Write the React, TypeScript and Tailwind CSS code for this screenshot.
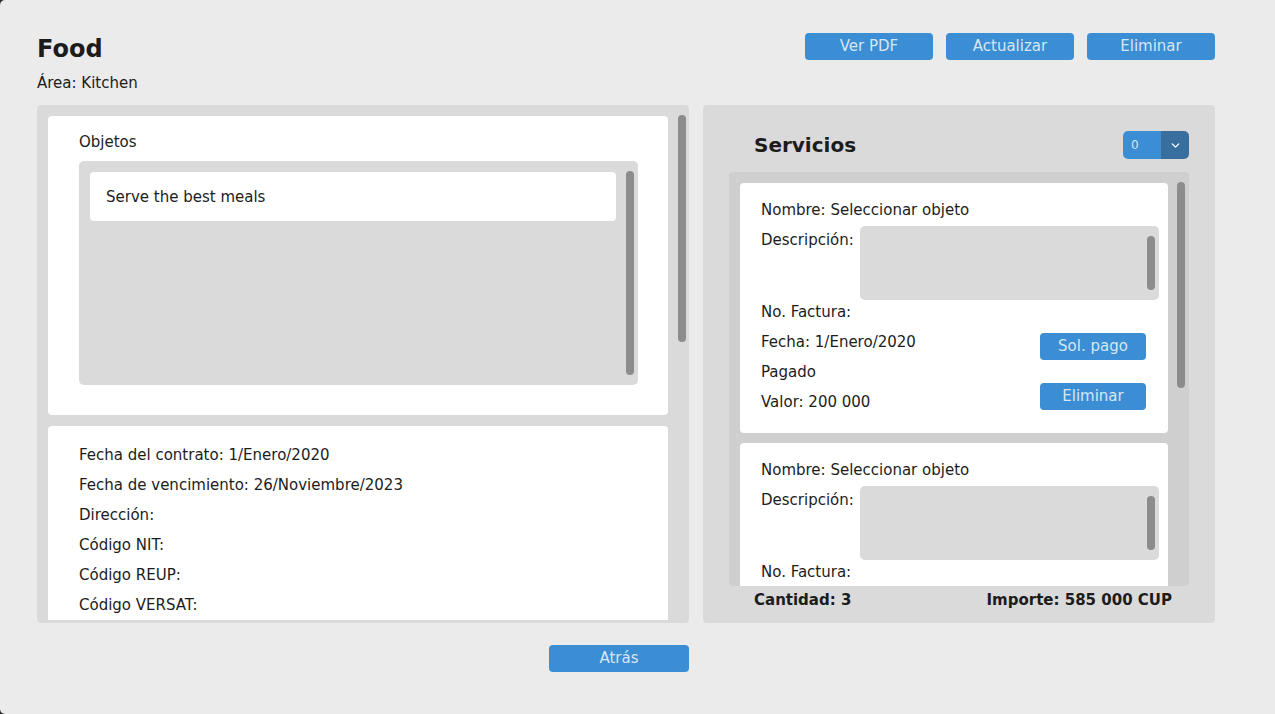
import { ChevronDown } from "lucide-react"

const font = "font-['DejaVu_Sans',sans-serif]"

function BlueButton({ label, className = "" }: { label: string; className?: string }) {
  return (
    <button className={`bg-[#3b8ed3] text-[#d6e6f4] rounded-[4px] text-[15px] leading-[27px] h-[27px] ${className}`}>
      {label}
    </button>
  )
}

function ServiceCard() {
  return (
    <div className="bg-white rounded-[4px] w-[428px] h-[250px] shrink-0 pl-[21px] pr-[9px] pt-[16px] text-[15px] leading-[22px]">
      <div>Nombre: Seleccionar objeto</div>
      <div className="flex mt-[5px]">
        <span className="mt-[3px] mr-[6px]">Descripción:</span>
        <div className="flex-1 h-[74px] bg-[#dadada] rounded-[5px] flex justify-end pt-[10px] pr-[4px]">
          <div className="w-[8px] h-[54px] rounded-full bg-[#8c8c8c]" />
        </div>
      </div>
      <div className="flex justify-between pr-[13px]">
        <div className="flex flex-col gap-[8px] mt-[1px]">
          <span>No. Factura:</span>
          <span>Fecha: 1/Enero/2020</span>
          <span>Pagado</span>
          <span>Valor: 200 000</span>
        </div>
        <div className="flex flex-col pt-[33px] gap-[23px]">
          <BlueButton label="Sol. pago" className="w-[106px]" />
          <BlueButton label="Eliminar" className="w-[106px]" />
        </div>
      </div>
    </div>
  )
}

export default function App() {
  return (
    <div className={`w-full h-[714px] bg-[#2a2a2a] ${font} text-[#1c1c1c]`}>
      <div className="h-full bg-[#ebebeb] rounded-l-[5px] pl-[37px] pr-[60px] pt-[31px]">
        {/* Header */}
        <div className="flex justify-between items-start">
          <div>
            <h1 className="text-[24px] font-bold leading-[36px]">Food</h1>
            <p className="text-[15px] leading-[22px] mt-[5px]">Área: Kitchen</p>
          </div>
          <div className="flex gap-[13px] mt-[2px]">
            <BlueButton label="Ver PDF" className="w-[128px]" />
            <BlueButton label="Actualizar" className="w-[128px]" />
            <BlueButton label="Eliminar" className="w-[128px]" />
          </div>
        </div>

        {/* Panels */}
        <div className="flex gap-[14px] mt-[11px] h-[518px]">
          {/* Left panel */}
          <div className="w-[652px] h-full bg-[#dadada] rounded-[4px] pl-[11px] pt-[11px] pr-[3px] pb-[3px] flex gap-[10px]">
            <div className="w-[620px] h-full flex flex-col gap-[11px] shrink-0 overflow-hidden">
              <div className="bg-white rounded-[4px] h-[299px] shrink-0 pl-[31px] pr-[30px] pt-[15px] text-[15px]">
                <div className="leading-[22px]">Objetos</div>
                <div className="mt-[8px] h-[224px] bg-[#dadada] rounded-[5px] flex pl-[11px] pt-[11px] pr-[4px] gap-[10px]">
                  <div className="flex-1 h-[49px] bg-white rounded-[4px] pl-[16px] pt-[1px] flex items-center">
                    Serve the best meals
                  </div>
                  <div className="w-[8px] h-[204px] -mt-[1px] rounded-full bg-[#8c8c8c]" />
                </div>
              </div>
              <div className="bg-white rounded-t-[4px] h-[194px] shrink-0 overflow-hidden pl-[31px] pt-[14px] text-[15px] leading-[30px]">
                <div>Fecha del contrato: 1/Enero/2020</div>
                <div>Fecha de vencimiento: 26/Noviembre/2023</div>
                <div>Dirección:</div>
                <div>Código NIT:</div>
                <div>Código REUP:</div>
                <div>Código VERSAT:</div>
              </div>
            </div>
            <div className="w-[8px] h-[227px] -mt-[1px] rounded-full bg-[#8c8c8c]" />
          </div>

          {/* Right panel */}
          <div className="w-[512px] h-full bg-[#dadada] rounded-[4px] px-[26px] pt-[26px] flex flex-col">
            <div className="flex justify-between items-center h-[28px] pl-[25px]">
              <h2 className="text-[20px] font-bold">Servicios</h2>
              <div className="flex h-[28px] w-[66px] rounded-[5px] overflow-hidden">
                <div className="w-[38px] bg-[#3b8ed3] text-[#d6e6f4] text-[12px] pl-[8px] flex items-center">0</div>
                <div className="flex-1 bg-[#396f9e] flex items-center justify-center text-white">
                  <ChevronDown size={13} strokeWidth={2.5} />
                </div>
              </div>
            </div>
            <div className="mt-[13px] h-[414px] shrink-0 bg-[#cfcfcf] rounded-[4px] flex pl-[11px] pt-[11px] pr-[4px] gap-[9px] overflow-hidden">
              <div className="flex flex-col gap-[10px] h-[403px] overflow-hidden">
                <ServiceCard />
                <ServiceCard />
              </div>
              <div className="w-[8px] h-[206px] -mt-[1px] rounded-full bg-[#8c8c8c]" />
            </div>
            <div className="flex justify-between pl-[25px] pr-[17px] text-[15px] font-bold leading-[28px]">
              <span>Cantidad: 3</span>
              <span>Importe: 585 000 CUP</span>
            </div>
          </div>
        </div>

        {/* Footer */}
        <div className="mt-[22px] pl-[512px]">
          <BlueButton label="Atrás" className="w-[140px]" />
        </div>
      </div>
    </div>
  )
}
